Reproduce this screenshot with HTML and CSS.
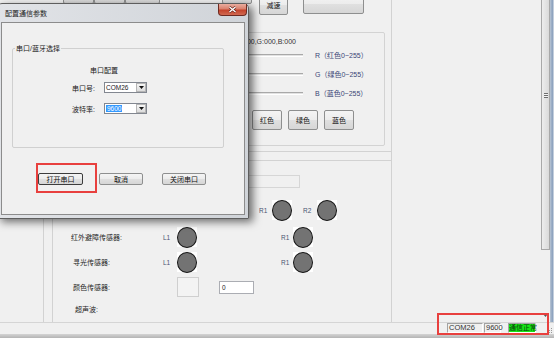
FILE: index.html
```html
<!DOCTYPE html>
<html lang="zh-CN">
<head>
  <meta charset="UTF-8" />
  <title>配置通信参数</title>
  <link rel="stylesheet" href="styles.css">
</head>
<body>

  <div class="window">
    <div class="client">

      <!-- main form -->
      <div class="form">
        <div class="toprow">
          <div class="btn btn-hid" style="margin-left:63px;width:31px">左</div>
          <div class="btn btn-hid" style="width:31px">停</div>
          <div class="btn btn-hid" style="width:35px">右</div>
          <div class="btn btn-hid" style="margin-left:62px;width:30px">加速</div>
          <div class="btn btn-slow">减速</div>
          <div class="btn btn-blank"></div>
        </div>

        <!-- RGB -->
        <div class="rgbpanel">
          <div class="rgbgroup">
            <div class="rgbtext">R:000,G:000,B:000</div>
            <div class="sliders">
              <div class="slider-row"><div class="track"></div><span class="slider-label">R（红色0~255）</span></div>
              <div class="slider-row"><div class="track"></div><span class="slider-label">G（绿色0~255）</span></div>
              <div class="slider-row"><div class="track"></div><span class="slider-label">B（蓝色0~255）</span></div>
            </div>
            <div class="color-btns">
              <div class="btn btn-color">红色</div>
              <div class="btn btn-color">绿色</div>
              <div class="btn btn-color">蓝色</div>
            </div>
          </div>
        </div>

        <!-- sensors -->
        <div class="lower">
          <div class="sensorbox">
            <div class="sb-text"></div>
            <div class="led-row">
              <span class="tag">R1</span><div class="led"></div>
              <span class="tag tag-r2">R2</span><div class="led"></div>
            </div>
            <div class="srows">
              <div class="srow">
                <span class="slabel">红外避障传感器:</span>
                <span class="tag tag-l">L1</span><div class="led"></div>
                <span class="tag tag-r">R1</span><div class="led"></div>
              </div>
              <div class="srow">
                <span class="slabel slabel-in">寻光传感器:</span>
                <span class="tag tag-l">L1</span><div class="led"></div>
                <span class="tag tag-r">R1</span><div class="led"></div>
              </div>
              <div class="srow">
                <span class="slabel slabel-in">颜色传感器:</span>
                <div class="swatch"></div>
                <div class="numbox">0</div>
              </div>
              <div class="srow srow-us">
                <span class="slabel slabel-us">超声波:</span>
              </div>
            </div>
          </div>
        </div>
      </div>

      <div class="blank"></div>

      <div class="vscroll">
        <div class="thumb"><div class="grip"></div></div>
        <div class="vtrack">
          <svg width="5" height="3" viewBox="0 0 5 3"><path d="M0 0h5L2.5 3z" fill="#555"/></svg>
        </div>
      </div>
      <div class="edge"></div>
    </div>

    <!-- status bar -->
    <div class="statusbar">
      <div class="sp sp-com">COM26</div>
      <div class="sp sp-baud">9600</div>
      <div class="sp sp-ok">通信正常</div>
      <svg class="grip-corner" width="6" height="8" viewBox="0 0 6 8">
        <rect x="4" y="2" width="1" height="1" fill="#999"/>
        <rect x="4" y="4" width="1" height="1" fill="#999"/>
        <rect x="2" y="4" width="1" height="1" fill="#999"/>
        <rect x="4" y="6" width="1" height="1" fill="#999"/>
        <rect x="2" y="6" width="1" height="1" fill="#999"/>
        <rect x="0" y="6" width="1" height="1" fill="#999"/>
      </svg>
    </div>
    <div class="bottomedge"></div>

    <!-- dialog window -->
    <div class="dialog">
      <div class="dlg-title">
        <span>配置通信参数</span>
        <div class="dlg-close">
          <svg width="9" height="7" viewBox="0 0 9 7">
            <path d="M1.5 1l6 5M7.5 1l-6 5" stroke="#5a1d14" stroke-width="2.6"/>
            <path d="M1.5 1l6 5M7.5 1l-6 5" stroke="#fff" stroke-width="1.5"/>
          </svg>
        </div>
      </div>
      <div class="dlg-body">
        <div class="group">
          <div class="group-title">串口/蓝牙选择</div>
          <div class="cfg-head">串口配置</div>
          <div class="field">
            <span class="field-label">串口号:</span>
            <div class="combo">
              <span class="combo-val">COM26</span>
              <span class="combo-btn"><svg width="5" height="3" viewBox="0 0 5 3"><path d="M0 0h5L2.5 3z" fill="#111"/></svg></span>
            </div>
          </div>
          <div class="field field-2">
            <span class="field-label">波特率:</span>
            <div class="combo">
              <span class="combo-val"><span class="sel">9600</span></span>
              <span class="combo-btn"><svg width="5" height="3" viewBox="0 0 5 3"><path d="M0 0h5L2.5 3z" fill="#111"/></svg></span>
            </div>
          </div>
        </div>
        <div class="dlg-btns">
          <div class="btn btn-default">打开串口</div>
          <div class="btn btn-cancel">取消</div>
          <div class="btn btn-close">关闭串口</div>
        </div>
      </div>
    </div>

    <!-- red annotation boxes -->
    <div class="mark mark-open"></div>
    <div class="mark mark-status"></div>
  </div>

</body>
</html>
```

FILE: styles.css
```css
* {
  box-sizing: border-box;
}

body {
  margin: 0;
  font-family: "Liberation Sans", "Noto Sans CJK SC", sans-serif;
  font-size: 7px;
  color: #222;
}

.window {
  position: relative;
  width: 554px;
  height: 338px;
  overflow: hidden;
  background: #f0f0f0;
  display: flex;
  flex-direction: column;
}

.client {
  display: flex;
  height: 322px;
}

/* buttons */
.btn {
  display: flex;
  align-items: center;
  justify-content: center;
  border: 1px solid #8e8f8f;
  border-radius: 2px;
  background: linear-gradient(#f4f4f4 0%, #ececec 50%, #e0e0e0 51%, #d6d6d6 100%);
  color: #111;
  line-height: 9px;
  white-space: nowrap;
}

/* main form */
.form {
  width: 392px;
  border-right: 1px solid #d2d2d2;
  display: flex;
  flex-direction: column;
}

.toprow {
  height: 16px;
  display: flex;
  align-items: flex-start;
}

.btn-hid {
  margin-top: -12px;
  height: 16px;
}

.btn-slow {
  margin: -5px 0 0 7px;
  width: 29px;
  height: 20px;
}

.btn-blank {
  margin: -6px 0 0 15px;
  width: 61px;
  height: 20px;
}

.rgbpanel {
  height: 136px;
  border-bottom: 1px solid #d2d2d2;
}

.rgbgroup {
  margin: 16px 0 0 150px;
  width: 235px;
  height: 114px;
  border: 1px solid #d3d3d3;
  border-radius: 2px;
}

.rgbtext {
  margin: 4px 0 0 85px;
  height: 9px;
  line-height: 9px;
  color: #333;
}

.sliders {
  margin-top: 3px;
  display: flex;
  flex-direction: column;
  gap: 6px;
}

.slider-row {
  height: 13px;
  display: flex;
  align-items: center;
}

.track {
  margin-left: 9px;
  width: 143px;
  height: 3px;
  border-top: 1px solid #a9a9a9;
  border-bottom: 1px solid #fff;
  background: #e2e2e2;
}

.slider-label {
  margin-left: 12px;
  color: #3b4676;
  line-height: 9px;
}

.color-btns {
  margin: 10px 0 0 101px;
  display: flex;
  gap: 6px;
}

.btn-color {
  width: 30px;
  height: 20px;
}

.lower {
  flex: 1;
  margin-left: 43px;
  border-left: 1px solid #d2d2d2;
  display: flex;
  flex-direction: column;
}

.sensorbox {
  flex: 1;
  margin: 8px 0 0 8px;
  border-top: 1px solid #d2d2d2;
  border-left: 1px solid #d2d2d2;
}

.sb-text {
  margin: 14px 0 0 117px;
  width: 130px;
  height: 13px;
  border: 1px solid #d6d6d6;
}

.led-row {
  margin-top: 12px;
  padding-left: 206px;
  height: 20px;
  display: flex;
  align-items: center;
}

.tag {
  width: 13px;
  font-size: 6.5px;
  color: #4a5472;
}

.tag-r2 {
  margin-left: 11px;
  width: 14px;
}

.tag-l {
  width: 14px;
}

.tag-r {
  margin-left: 84px;
  width: 12px;
}

.led {
  width: 20px;
  height: 20px;
  background: #fff;
  display: flex;
  align-items: center;
  justify-content: center;
}

.led::before {
  content: "";
  width: 19px;
  height: 19px;
  border-radius: 50%;
  border: 1.5px solid #161616;
  background: #737373;
}

.srows {
  margin-top: 7px;
  display: flex;
  flex-direction: column;
  gap: 5px;
}

.srow {
  height: 20px;
  display: flex;
  align-items: center;
}

.srow-us {
  height: 14px;
}

.slabel {
  width: 110px;
  padding-left: 18px;
  color: #1e1e1e;
}

.slabel-in {
  padding-left: 20px;
}

.slabel-us {
  padding-left: 22px;
}

.swatch {
  margin-left: 14px;
  width: 22px;
  height: 20px;
  border: 1px solid #cfcfcf;
  background: #f3f3f3;
}

.numbox {
  margin-left: 20px;
  width: 35px;
  height: 13px;
  border: 1px solid #abadb3;
  background: #fff;
  padding-left: 2px;
  line-height: 11px;
  font-size: 6.5px;
}

/* right side */
.blank {
  flex: 1;
}

.vscroll {
  width: 9px;
  display: flex;
  flex-direction: column;
}

.thumb {
  height: 250px;
  border: 1px solid #a8a8a8;
  border-top: none;
  background: linear-gradient(to right, #ededed, #dadada);
  padding-top: 93px;
}

.grip {
  margin: 0 auto;
  width: 4px;
  height: 5px;
  background: repeating-linear-gradient(#6e6e6e 0 1px, #f4f4f4 1px 2px);
}

.vtrack {
  flex: 1;
  display: flex;
  align-items: flex-end;
  justify-content: center;
  padding-bottom: 5px;
}

.edge {
  width: 4px;
  background: linear-gradient(to right, #b9c5d4, #8aa0bd 60%, #dde3ea);
}

/* status bar */
.statusbar {
  height: 12px;
  border-top: 1px solid #d5d5d5;
  display: flex;
  justify-content: flex-end;
  align-items: flex-start;
  padding-right: 1px;
}

.sp {
  height: 10px;
  border: 1px solid;
  border-color: #a3a3a3 #fff #fff #a3a3a3;
  padding-left: 1px;
  line-height: 8px;
  font-size: 7.5px;
  color: #333;
  white-space: nowrap;
}

.sp-com {
  width: 36px;
}

.sp-baud {
  margin-left: 1px;
  width: 17px;
}

.sp-ok {
  margin-left: 7px;
  width: 28px;
  padding-left: 0;
  font-size: 7px;
  background: #16e616;
  color: #0c3b0c;
}

.grip-corner {
  margin-left: 11px;
  align-self: flex-end;
}

.bottomedge {
  height: 4px;
  background: linear-gradient(#d4d4d4, #b4b4b4);
}

/* dialog */
.dialog {
  position: absolute;
  left: -3px;
  top: 3px;
  width: 252px;
  height: 216px;
  border: 1px solid #5e5e5e;
  border-radius: 5px 5px 0 0;
  background: linear-gradient(to right, #e1e3e7, #d0d4d9);
  box-shadow: 4px 3px 8px rgba(0, 0, 0, 0.55);
  display: flex;
  flex-direction: column;
}

.dlg-title {
  height: 18px;
  display: flex;
  align-items: center;
  padding-left: 7px;
  color: #1c1c1c;
}

.dlg-close {
  margin-left: auto;
  margin-right: 1px;
  align-self: flex-start;
  width: 29px;
  height: 12px;
  border: 1px solid #6e2a21;
  border-top: none;
  border-radius: 0 0 4px 4px;
  background: linear-gradient(#e9ad9f 0%, #d9806d 45%, #c4432b 55%, #d16a52 100%);
  display: flex;
  align-items: center;
  justify-content: center;
}

.dlg-body {
  flex: 1;
  margin: 0 3px 3px;
  border: 1px solid #8c8c8c;
  background: #f0f0f0;
}

.group {
  margin: 25px 0 0 10px;
  width: 212px;
  height: 100px;
  border: 1px solid #d0d0d0;
  border-radius: 2px;
}

.group-title {
  display: table;
  margin: -5px 0 0 2px;
  padding: 0 1px;
  line-height: 9px;
  background: #f0f0f0;
}

.cfg-head {
  margin: 13px 0 0 77px;
  line-height: 9px;
}

.field {
  margin: 7px 0 0 59px;
  height: 11px;
  display: flex;
  align-items: center;
}

.field-2 {
  margin-top: 10px;
}

.field-label {
  width: 32px;
}

.combo {
  width: 43px;
  height: 11px;
  border: 1px solid #828790;
  background: #fff;
  display: flex;
}

.combo-val {
  flex: 1;
  padding-left: 1px;
  font-size: 6.5px;
  line-height: 9px;
}

.sel {
  padding: 0 1px;
  background: #3399ff;
  color: #fff;
}

.combo-btn {
  width: 10px;
  border: 1px solid #b5b5b5;
  background: linear-gradient(#f6f6f6, #dcdcdc);
  display: flex;
  align-items: center;
  justify-content: center;
}

.dlg-btns {
  margin: 25px 0 0 36px;
  display: flex;
}

.dlg-btns .btn {
  height: 12px;
  width: 44px;
}

.btn-default {
  width: 45px !important;
  border-color: #3c3c3c;
}

.btn-cancel {
  margin-left: 16px;
}

.btn-close {
  margin-left: 19px;
}

/* annotation boxes */
.mark {
  position: absolute;
  border: 2px solid #e8403e;
}

.mark-open {
  left: 36px;
  top: 163px;
  width: 61px;
  height: 30px;
}

.mark-status {
  left: 437px;
  top: 313px;
  width: 112px;
  height: 22px;
}
```
